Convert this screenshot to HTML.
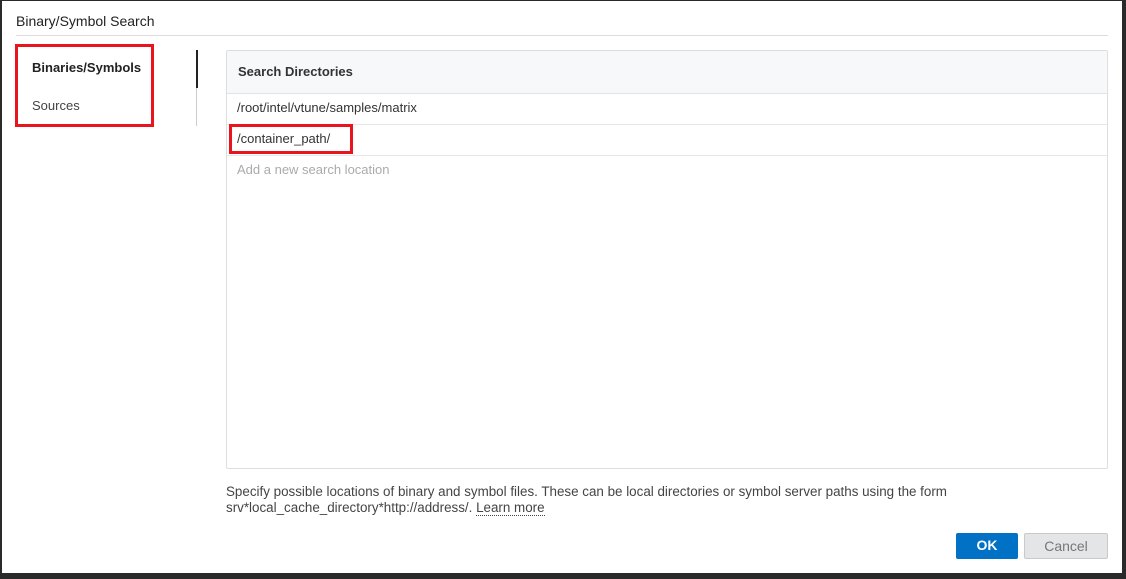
<!DOCTYPE html>
<html><head><style>
*{margin:0;padding:0;box-sizing:border-box}
body{width:1126px;height:579px;background:#2a2a2a;position:relative;overflow:hidden;font-family:"Liberation Sans",sans-serif;color:#333}
.dlg{position:absolute;left:2px;top:1px;width:1120px;height:572px;background:#fff}
.t{position:absolute;left:16px;top:13px;font-size:14px;color:#222}
.hl{position:absolute;left:16px;top:35px;width:1092px;height:1px;background:#dcdcdc}
.a{position:absolute;font-size:13px}
.red{position:absolute;border:3px solid #e8141e}
.panel{position:absolute;left:226px;top:50px;width:882px;height:419px;border:1px solid #dedede;border-radius:2px;background:#fff}
.ph{height:43px;background:#f7f8fa;border-bottom:1px solid #e3e3e3;font-size:13px;font-weight:bold;padding:13px 0 0 11px;color:#333}
.row{height:31px;border-bottom:1px solid #e8e8e8;font-size:13px;padding:6px 0 0 10px}
.btn{position:absolute;top:533px;height:26px;border-radius:2px;font-size:14px;text-align:center;line-height:25px}
</style></head><body>
<div class="dlg"></div>
<div class="t">Binary/Symbol Search</div>
<div class="hl"></div>
<div class="red" style="left:15px;top:44px;width:139px;height:83px"></div>
<div class="a" style="left:32px;top:60px;font-weight:bold;color:#222">Binaries/Symbols</div>
<div class="a" style="left:32px;top:98px;color:#444">Sources</div>
<div style="position:absolute;left:196px;top:50px;width:2px;height:38px;background:#222"></div>
<div style="position:absolute;left:196px;top:88px;width:1px;height:38px;background:#ccc"></div>
<div class="panel">
<div class="ph">Search Directories</div>
<div class="row">/root/intel/vtune/samples/matrix</div>
<div class="row">/container_path/</div>
<div class="row" style="color:#aaa;border:none">Add a new search location</div>
</div>
<div class="red" style="left:229px;top:124px;width:124px;height:30px"></div>
<div class="a" style="left:226px;top:484px;color:#444;line-height:16px;font-size:13.4px">Specify possible locations of binary and symbol files. These can be local directories or symbol server paths using the form<br>srv*local_cache_directory*http://address/. <span style="border-bottom:1px dotted #444">Learn more</span></div>
<div class="btn" style="left:956px;width:62px;background:#0071c5;color:#fff;font-weight:bold">OK</div>
<div class="btn" style="left:1024px;width:84px;background:#e4e5e7;border:1px solid #c9c9c9;color:#777">Cancel</div>
</body></html>
